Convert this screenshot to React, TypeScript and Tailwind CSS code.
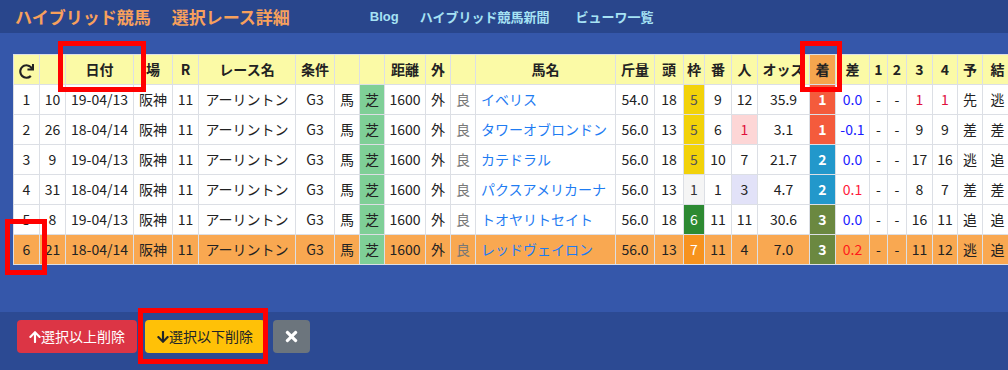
import React from "react";
import { FaRedo, FaArrowUp, FaArrowDown, FaTimes } from "react-icons/fa";

const cols = [26, 26, 68, 39, 26, 97, 39, 25, 25, 41, 25, 25, 140, 39, 29, 21, 27, 26, 52, 26, 34, 18, 19, 26, 25, 25, 30];

type Row = {
  no: string; id: string; date: string; horse: string; kin: string; tou: string;
  waku: string; wakuBg: string; wakuFg: string; ban: string; nin: string; ninBg?: string; ninFg?: string;
  odds: string; chaku: string; chakuBg: string; sa: string; saFg: string;
  c3: string; c4: string; c34Fg?: string; yo: string; ke: string; hl?: boolean;
};

const rows: Row[] = [
  { no: "1", id: "10", date: "19-04/13", horse: "イベリス", kin: "54.0", tou: "18", waku: "5", wakuBg: "bg-[#f2d20a]", wakuFg: "text-[#555]", ban: "9", nin: "12", odds: "35.9", chaku: "1", chakuBg: "bg-[#f45b3c]", sa: "0.0", saFg: "text-[#1a1aff]", c3: "1", c4: "1", c34Fg: "text-[#e0103c]", yo: "先", ke: "逃" },
  { no: "2", id: "26", date: "18-04/14", horse: "タワーオブロンドン", kin: "56.0", tou: "13", waku: "5", wakuBg: "bg-[#f2d20a]", wakuFg: "text-[#555]", ban: "6", nin: "1", ninBg: "bg-[#fdd6d6]", ninFg: "text-[#e0103c]", odds: "3.1", chaku: "1", chakuBg: "bg-[#f45b3c]", sa: "-0.1", saFg: "text-[#1a1aff]", c3: "9", c4: "9", yo: "差", ke: "差" },
  { no: "3", id: "9", date: "19-04/13", horse: "カテドラル", kin: "56.0", tou: "18", waku: "5", wakuBg: "bg-[#f2d20a]", wakuFg: "text-[#555]", ban: "10", nin: "7", odds: "21.7", chaku: "2", chakuBg: "bg-[#2298cb]", sa: "0.0", saFg: "text-[#1a1aff]", c3: "17", c4: "16", yo: "逃", ke: "追" },
  { no: "4", id: "31", date: "18-04/14", horse: "パクスアメリカーナ", kin: "56.0", tou: "13", waku: "1", wakuBg: "bg-[#f5f5f5]", wakuFg: "text-[#333]", ban: "1", nin: "3", ninBg: "bg-[#e2e2f8]", odds: "4.7", chaku: "2", chakuBg: "bg-[#2298cb]", sa: "0.1", saFg: "text-[#ff1a3c]", c3: "8", c4: "7", yo: "差", ke: "差" },
  { no: "5", id: "8", date: "19-04/13", horse: "トオヤリトセイト", kin: "56.0", tou: "18", waku: "6", wakuBg: "bg-[#2d8a32]", wakuFg: "text-white", ban: "11", nin: "11", odds: "30.6", chaku: "3", chakuBg: "bg-[#6b8840]", sa: "0.0", saFg: "text-[#1a1aff]", c3: "16", c4: "11", yo: "追", ke: "追" },
  { no: "6", id: "21", date: "18-04/14", horse: "レッドヴェイロン", kin: "56.0", tou: "13", waku: "7", wakuBg: "bg-[#f7931e]", wakuFg: "text-white", ban: "11", nin: "4", odds: "7.0", chaku: "3", chakuBg: "bg-[#6b8840]", sa: "0.2", saFg: "text-[#ff1a1a]", c3: "11", c4: "12", yo: "逃", ke: "追", hl: true },
];

const headers: React.ReactNode[] = [
  <FaRedo className="inline-block w-[15px] h-[15px] text-[#222]" />,
  "", "日付", "場", "R", "レース名", "条件", "", "", "距離", "外", "", "馬名", "斤量", "頭", "枠", "番", "人", "オッズ", "着", "差", "1", "2", "3", "4", "予", "結",
];

const td = "border border-[#dcdfe5] text-center align-middle whitespace-nowrap overflow-hidden p-0";

export default function App() {
  return (
    <div
      className="relative w-[1008px] h-[370px] overflow-hidden flex flex-col bg-[#3557aa]"
      style={{ fontFamily: '"Noto Sans CJK JP", "Noto Sans", sans-serif' }}
    >
      {/* Header */}
      <div className="h-[33px] shrink-0 bg-[#29468c] flex items-center pl-[15px]">
        <span className="text-[17px] font-bold text-[#f7a05c] tracking-[0px]">ハイブリッド競馬</span>
        <span className="ml-[21px] text-[17px] font-bold text-[#f7a05c]">選択レース詳細</span>
        <span className="ml-[80px] text-[13px] font-bold text-[#a6e2f4]" style={{ fontFamily: '"Liberation Sans", "Noto Sans CJK JP", sans-serif' }}>Blog</span>
        <span className="ml-[21px] text-[13px] font-bold text-[#a6e2f4]">ハイブリッド競馬新聞</span>
        <span className="ml-[26px] text-[13px] font-bold text-[#a6e2f4]">ビューワ一覧</span>
      </div>

      {/* Main */}
      <div className="flex-1 pt-[21px] pl-[13px] overflow-hidden">
        <table className="table-fixed border-collapse text-[14px] text-[#222]" style={{ width: cols.reduce((a, b) => a + b, 0) }}>
          <colgroup>
            {cols.map((w, i) => (
              <col key={i} style={{ width: w }} />
            ))}
          </colgroup>
          <thead>
            <tr className="h-[30px]">
              {headers.map((h, i) => (
                <th
                  key={i}
                  className={`${td} font-bold text-[14px] ${i === 19 ? "bg-[#f6a54e]" : "bg-[#fbfaa6]"}`}
                >
                  {h}
                </th>
              ))}
            </tr>
          </thead>
          <tbody>
            {rows.map((r, i) => {
              const bg = r.hl ? "bg-[#f9a851]" : "bg-white";
              return (
                <tr key={i} className={`h-[30px] ${bg}`}>
                  <td className={td}>{r.no}</td>
                  <td className={td}>{r.id}</td>
                  <td className={td}>{r.date}</td>
                  <td className={td}>阪神</td>
                  <td className={td}>11</td>
                  <td className={td}>アーリントン</td>
                  <td className={td}>G3</td>
                  <td className={td}>馬</td>
                  <td className={`${td} bg-[#7fcf97]`}>芝</td>
                  <td className={td}>1600</td>
                  <td className={td}>外</td>
                  <td className={`${td} text-[#777]`}>良</td>
                  <td className={`${td} text-left pl-[5px] text-[#1f7cf2]`}>{r.horse}</td>
                  <td className={td}>{r.kin}</td>
                  <td className={td}>{r.tou}</td>
                  <td className={`${td} ${r.wakuBg} ${r.wakuFg}`}>{r.waku}</td>
                  <td className={td}>{r.ban}</td>
                  <td className={`${td} ${r.ninBg ?? ""} ${r.ninFg ?? ""}`}>{r.nin}</td>
                  <td className={td}>{r.odds}</td>
                  <td className={`${td} ${r.chakuBg} text-white font-bold`}>{r.chaku}</td>
                  <td className={`${td} ${r.saFg}`}>{r.sa}</td>
                  <td className={td}>-</td>
                  <td className={td}>-</td>
                  <td className={`${td} ${r.c34Fg ?? ""}`}>{r.c3}</td>
                  <td className={`${td} ${r.c34Fg ?? ""}`}>{r.c4}</td>
                  <td className={td}>{r.yo}</td>
                  <td className={td}>{r.ke}</td>
                </tr>
              );
            })}
          </tbody>
        </table>
      </div>

      {/* Bottom bar */}
      <div className="h-[58px] shrink-0 bg-[#2c4a93] flex items-start pt-[8px] pl-[17px] gap-[8px]">
        <button className="h-[33px] w-[120px] rounded-[4px] bg-[#dc3545] text-white text-[14px] flex items-center justify-center">
          <FaArrowUp className="w-[12px] h-[14px]" />
          <span>選択以上削除</span>
        </button>
        <button className="h-[33px] w-[120px] rounded-[4px] bg-[#ffc107] text-[#212529] text-[14px] flex items-center justify-center">
          <FaArrowDown className="w-[12px] h-[14px]" />
          <span>選択以下削除</span>
        </button>
        <button className="h-[33px] w-[37px] rounded-[4px] bg-[#6c757d] text-white flex items-center justify-center">
          <FaTimes className="w-[15px] h-[17px]" />
        </button>
      </div>

      {/* Red annotation frames */}
      <div className="absolute left-[58px] top-[41px] w-[88px] h-[51px] border-[5px] border-[#ff0000] pointer-events-none" />
      <div className="absolute left-[800px] top-[41px] w-[42px] h-[51px] border-[5px] border-[#ff0000] pointer-events-none" />
      <div className="absolute left-[5px] top-[219px] w-[42px] h-[56px] border-[5px] border-[#ff0000] pointer-events-none" />
      <div className="absolute left-[138px] top-[308px] w-[130px] h-[56px] border-[5px] border-[#ff0000] pointer-events-none" />
    </div>
  );
}
